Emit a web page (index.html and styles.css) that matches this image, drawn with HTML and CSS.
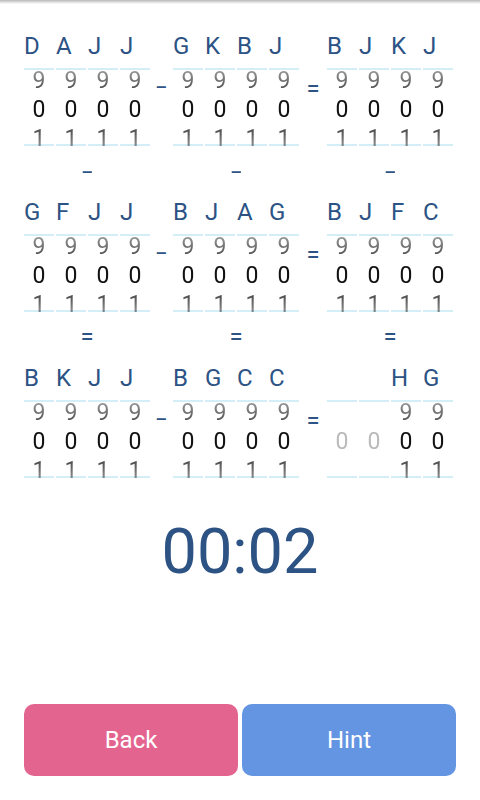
FILE: index.html
```html
<!DOCTYPE html>
<html>
<head>
<meta charset="utf-8">
<link rel="stylesheet" href="styles.css">
</head>
<body>
<div class="shade"></div>
<div class="board">
  <!-- Row 1 -->
  <div class="group">
    <span class="lt">D</span><span class="lt">A</span><span class="lt">J</span><span class="lt">J</span>
    <div class="pk"><div class="stk"><span class="s">9</span><span class="m">0</span><span class="s">1</span></div></div>
    <div class="pk"><div class="stk"><span class="s">9</span><span class="m">0</span><span class="s">1</span></div></div>
    <div class="pk"><div class="stk"><span class="s">9</span><span class="m">0</span><span class="s">1</span></div></div>
    <div class="pk"><div class="stk"><span class="s">9</span><span class="m">0</span><span class="s">1</span></div></div>
  </div>
  <div class="op"><span class="minus">-</span></div>
  <div class="group">
    <span class="lt">G</span><span class="lt">K</span><span class="lt">B</span><span class="lt">J</span>
    <div class="pk"><div class="stk"><span class="s">9</span><span class="m">0</span><span class="s">1</span></div></div>
    <div class="pk"><div class="stk"><span class="s">9</span><span class="m">0</span><span class="s">1</span></div></div>
    <div class="pk"><div class="stk"><span class="s">9</span><span class="m">0</span><span class="s">1</span></div></div>
    <div class="pk"><div class="stk"><span class="s">9</span><span class="m">0</span><span class="s">1</span></div></div>
  </div>
  <div class="op">=</div>
  <div class="group">
    <span class="lt">B</span><span class="lt">J</span><span class="lt">K</span><span class="lt">J</span>
    <div class="pk"><div class="stk"><span class="s">9</span><span class="m">0</span><span class="s">1</span></div></div>
    <div class="pk"><div class="stk"><span class="s">9</span><span class="m">0</span><span class="s">1</span></div></div>
    <div class="pk"><div class="stk"><span class="s">9</span><span class="m">0</span><span class="s">1</span></div></div>
    <div class="pk"><div class="stk"><span class="s">9</span><span class="m">0</span><span class="s">1</span></div></div>
  </div>

  <div class="vop"><span class="vminus">-</span></div><div></div><div class="vop"><span class="vminus">-</span></div><div></div><div class="vop"><span class="vminus">-</span></div>

  <!-- Row 2 -->
  <div class="group">
    <span class="lt">G</span><span class="lt">F</span><span class="lt">J</span><span class="lt">J</span>
    <div class="pk"><div class="stk"><span class="s">9</span><span class="m">0</span><span class="s">1</span></div></div>
    <div class="pk"><div class="stk"><span class="s">9</span><span class="m">0</span><span class="s">1</span></div></div>
    <div class="pk"><div class="stk"><span class="s">9</span><span class="m">0</span><span class="s">1</span></div></div>
    <div class="pk"><div class="stk"><span class="s">9</span><span class="m">0</span><span class="s">1</span></div></div>
  </div>
  <div class="op"><span class="minus">-</span></div>
  <div class="group">
    <span class="lt">B</span><span class="lt">J</span><span class="lt">A</span><span class="lt">G</span>
    <div class="pk"><div class="stk"><span class="s">9</span><span class="m">0</span><span class="s">1</span></div></div>
    <div class="pk"><div class="stk"><span class="s">9</span><span class="m">0</span><span class="s">1</span></div></div>
    <div class="pk"><div class="stk"><span class="s">9</span><span class="m">0</span><span class="s">1</span></div></div>
    <div class="pk"><div class="stk"><span class="s">9</span><span class="m">0</span><span class="s">1</span></div></div>
  </div>
  <div class="op">=</div>
  <div class="group">
    <span class="lt">B</span><span class="lt">J</span><span class="lt">F</span><span class="lt">C</span>
    <div class="pk"><div class="stk"><span class="s">9</span><span class="m">0</span><span class="s">1</span></div></div>
    <div class="pk"><div class="stk"><span class="s">9</span><span class="m">0</span><span class="s">1</span></div></div>
    <div class="pk"><div class="stk"><span class="s">9</span><span class="m">0</span><span class="s">1</span></div></div>
    <div class="pk"><div class="stk"><span class="s">9</span><span class="m">0</span><span class="s">1</span></div></div>
  </div>

  <div class="vop">=</div><div></div><div class="vop">=</div><div></div><div class="vop">=</div>

  <!-- Row 3 -->
  <div class="group">
    <span class="lt">B</span><span class="lt">K</span><span class="lt">J</span><span class="lt">J</span>
    <div class="pk"><div class="stk"><span class="s">9</span><span class="m">0</span><span class="s">1</span></div></div>
    <div class="pk"><div class="stk"><span class="s">9</span><span class="m">0</span><span class="s">1</span></div></div>
    <div class="pk"><div class="stk"><span class="s">9</span><span class="m">0</span><span class="s">1</span></div></div>
    <div class="pk"><div class="stk"><span class="s">9</span><span class="m">0</span><span class="s">1</span></div></div>
  </div>
  <div class="op"><span class="minus">-</span></div>
  <div class="group">
    <span class="lt">B</span><span class="lt">G</span><span class="lt">C</span><span class="lt">C</span>
    <div class="pk"><div class="stk"><span class="s">9</span><span class="m">0</span><span class="s">1</span></div></div>
    <div class="pk"><div class="stk"><span class="s">9</span><span class="m">0</span><span class="s">1</span></div></div>
    <div class="pk"><div class="stk"><span class="s">9</span><span class="m">0</span><span class="s">1</span></div></div>
    <div class="pk"><div class="stk"><span class="s">9</span><span class="m">0</span><span class="s">1</span></div></div>
  </div>
  <div class="op">=</div>
  <div class="group">
    <span class="lt"></span><span class="lt"></span><span class="lt">H</span><span class="lt">G</span>
    <div class="pk"><div class="stk"><span class="s"></span><span class="m dim">0</span><span class="s"></span></div></div>
    <div class="pk"><div class="stk"><span class="s"></span><span class="m dim">0</span><span class="s"></span></div></div>
    <div class="pk"><div class="stk"><span class="s">9</span><span class="m">0</span><span class="s">1</span></div></div>
    <div class="pk"><div class="stk"><span class="s">9</span><span class="m">0</span><span class="s">1</span></div></div>
  </div>
</div>

<div class="timer">00:02</div>

<div class="actions">
  <button class="btn back">Back</button>
  <button class="btn hint">Hint</button>
</div>
</body>
</html>
```

FILE: styles.css
```css
html, body {
  margin: 0;
  padding: 0;
  background: #ffffff;
}
body {
  width: 480px;
  height: 800px;
  display: flex;
  flex-direction: column;
  font-family: Roboto, "Noto Sans", sans-serif;
  overflow: hidden;
}
.shade {
  height: 4px;
  background: linear-gradient(to bottom, rgba(0,0,0,0.28), rgba(0,0,0,0));
}
.board {
  margin-top: 27px;
  padding-left: 24px;
  display: grid;
  grid-template-columns: 126px 23px 126px 28px 126px;
  grid-template-rows: 115px 51px 115px 51px 115px;
}
.group {
  display: grid;
  grid-template-columns: repeat(4, 30px);
  grid-template-rows: 30px 78px;
  column-gap: 2px;
  row-gap: 7px;
}
.lt {
  font-size: 24px;
  line-height: 30px;
  color: #2c5384;
}
.pk {
  border-top: 2px solid #d3eef7;
  border-bottom: 2px solid #d3eef7;
  display: flex;
  flex-direction: column;
  justify-content: center;
  padding-top: 4px;
  height: 70px;
}
.stk {
  display: flex;
  flex-direction: column;
  align-items: center;
  -webkit-mask-image: linear-gradient(to bottom, rgba(0,0,0,0.45), #000 30%, #000 70%, rgba(0,0,0,0.45));
  mask-image: linear-gradient(to bottom, rgba(0,0,0,0.45), #000 30%, #000 70%, rgba(0,0,0,0.45));
}
.stk span {
  display: block;
  height: 29px;
  line-height: 29px;
  font-size: 23px;
  text-align: center;
}
.stk .s { color: #444; }
.stk .m { color: #111; }
.stk .m.dim { color: #bbbbbb; }
.op {
  align-self: center;
  text-align: center;
  font-size: 24px;
  color: #2c5384;
}
.minus {
  display: inline-block;
  transform: translateY(-3px) scaleX(1.6);
}
.vminus {
  display: inline-block;
  transform: scaleX(1.6);
}
.vop {
  text-align: center;
  font-size: 24px;
  line-height: 51px;
  color: #2c5384;
}
.timer {
  margin-top: 37px;
  text-align: center;
  font-size: 63px;
  color: #2c5384;
}
.actions {
  margin-top: auto;
  margin-bottom: 24px;
  padding: 0 24px;
  display: flex;
  gap: 4px;
}
.btn {
  flex: 1;
  height: 72px;
  border: none;
  border-radius: 10px;
  color: #ffffff;
  font-family: Roboto, "Noto Sans", sans-serif;
  font-size: 24px;
}
.back { background: #e3658f; }
.hint { background: #6495e2; }
```
